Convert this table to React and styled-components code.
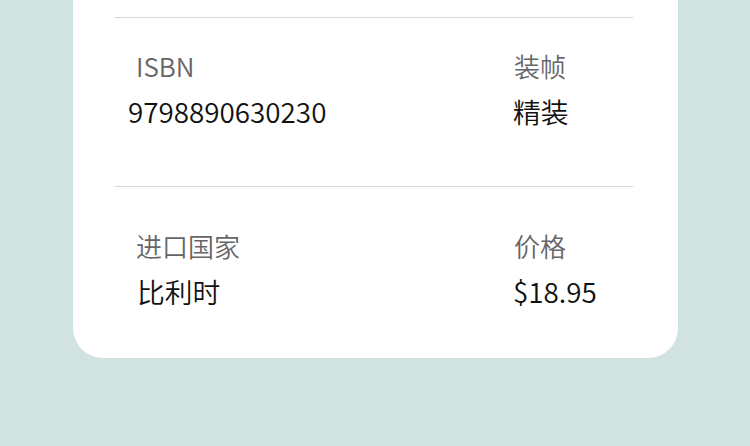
import React from 'react'
import styled, { createGlobalStyle } from 'styled-components'

const GlobalStyle = createGlobalStyle`
  html, body {
    margin: 0;
    padding: 0;
    background: #d0e3e1;
  }
  body {
    font-family: "Noto Sans CJK SC", "Noto Sans", sans-serif;
  }
`

const Page = styled.div`
  width: 750px;
  height: 446px;
  overflow: hidden;
  padding: 0 72px 0 73px;
  box-sizing: border-box;
`

const Card = styled.div`
  background: #ffffff;
  border-radius: 0 0 30px 30px;
  padding: 17px 45px 0 42px;
`

const Row = styled.div`
  display: grid;
  grid-template-columns: 378px 1fr;
  border-top: 1px solid #d6d6d6;
  padding: ${(p) => p.$top}px 0 ${(p) => p.$bottom}px 21px;
`

const Field = styled.div`
  display: flex;
  flex-direction: column;
  gap: 7px;
`

const Label = styled.div`
  font-size: 26px;
  font-weight: 350;
  line-height: 36px;
  color: #666666;
  white-space: nowrap;
`

const Value = styled.div`
  font-size: 27.8px;
  font-weight: 350;
  line-height: 40px;
  color: #111111;
  white-space: nowrap;
  margin-left: ${(p) => p.$shift || 0}px;
`

const rows = [
  {
    top: 30,
    bottom: 55,
    fields: [
      { label: 'ISBN', value: '9798890630230', shift: -8 },
      { label: '装帧', value: '精装', shift: -1 }
    ]
  },
  {
    top: 41,
    bottom: 47,
    fields: [
      { label: '进口国家', value: '比利时', shift: 1 },
      { label: '价格', value: '$18.95', shift: -1 }
    ]
  }
]

export default function App() {
  return (
    <>
      <GlobalStyle />
      <Page>
        <Card>
          {rows.map((row, ix) => (
            <Row key={ix} $top={row.top} $bottom={row.bottom}>
              {row.fields.map((f) => (
                <Field key={f.label}>
                  <Label>{f.label}</Label>
                  <Value $shift={f.shift}>{f.value}</Value>
                </Field>
              ))}
            </Row>
          ))}
        </Card>
      </Page>
    </>
  )
}
